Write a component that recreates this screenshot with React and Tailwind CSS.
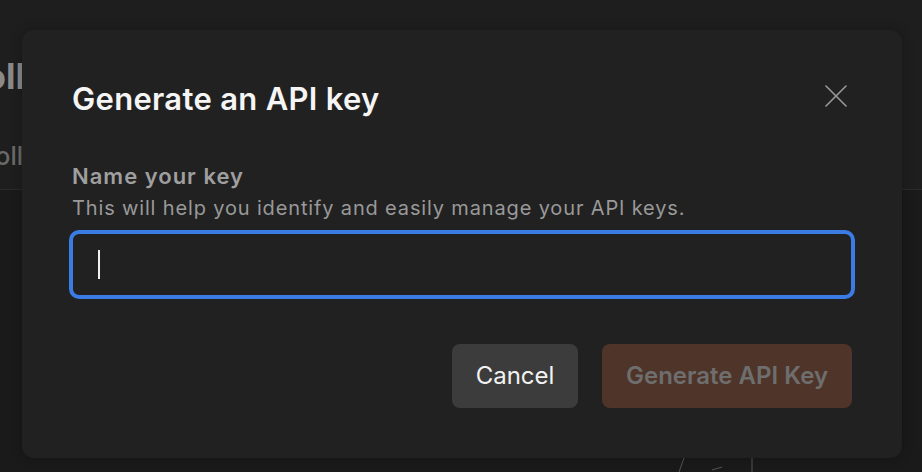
export default function App() {
  return (
    <div className="relative w-[922px] h-[472px] overflow-hidden bg-[#1a1a1a] font-['Inter',sans-serif]">
      {/* Page behind the dialog */}
      <div className="h-[190px] bg-[#1e1e1e] border-b border-[#2a2a2a] pt-[55px]">
        <div className="w-[25px] flex justify-end">
          <span className="whitespace-nowrap text-[35px] leading-[42px] font-bold text-[#8a8a8a]">Poll</span>
        </div>
        <div className="w-[23px] flex justify-end mt-[44px]">
          <span className="whitespace-nowrap text-[25px] leading-[30px] font-medium text-[#6a6a6a]">Coll</span>
        </div>
      </div>
      <div className="flex justify-end pr-[160px]">
        <svg width="90" height="282" viewBox="0 0 90 282" className="text-[#555]">
          <path d="M12 268 L7 282" stroke="currentColor" strokeWidth="1" fill="none" />
          <path d="M40 280 L50 277" stroke="currentColor" strokeWidth="1" fill="none" />
          <path d="M80 268 L80 282" stroke="currentColor" strokeWidth="1" fill="none" />
        </svg>
      </div>

      {/* Dialog */}
      <div className="absolute left-[22px] top-[30px] w-[880px] h-[428px] rounded-[12px] bg-[#212121] px-[50px] pt-[51px] shadow-[0_0_12px_rgba(0,0,0,0.25)]">
        <div className="flex items-start justify-between">
          <h2 className="text-[31px] leading-[36px] font-semibold text-[#f5f5f5] tracking-[0.3px]">Generate an API key</h2>
          <button className="mt-[4px] mr-[5px] text-[#9a9a9a]">
            <svg width="22" height="22" viewBox="0 0 22 22" fill="none" stroke="currentColor" strokeWidth="1.6" strokeLinecap="round">
              <path d="M1 1 L21 21" />
              <path d="M21 1 L1 21" />
            </svg>
          </button>
        </div>

        <div className="mt-[45px]">
          <p className="text-[22px] leading-[28px] font-semibold text-[#9f9f9f] tracking-[1px]">Name your key</p>
          <p className="mt-[5px] text-[20px] leading-[26px] text-[#999999] tracking-[0.85px]">
            This will help you identify and easily manage your API keys.
          </p>
        </div>

        <div className="mt-[9px] -mx-[3px] h-[69px] rounded-[10px] border-[4px] border-[#3a7be4] bg-[#212121] flex items-center pl-[25px]">
          <div className="w-[2px] h-[29px] bg-[#f0f0f0]" />
        </div>

        <div className="mt-[45px] flex justify-end gap-[24px]">
          <button className="h-[64px] w-[126px] rounded-[8px] bg-[#3c3c3c] text-[24px] text-[#f2f2f2]">
            Cancel
          </button>
          <button className="h-[64px] w-[250px] rounded-[8px] bg-[#4f3429] text-[24px] font-semibold text-[#6e6e6e]">
            Generate API Key
          </button>
        </div>
      </div>
    </div>
  );
}
